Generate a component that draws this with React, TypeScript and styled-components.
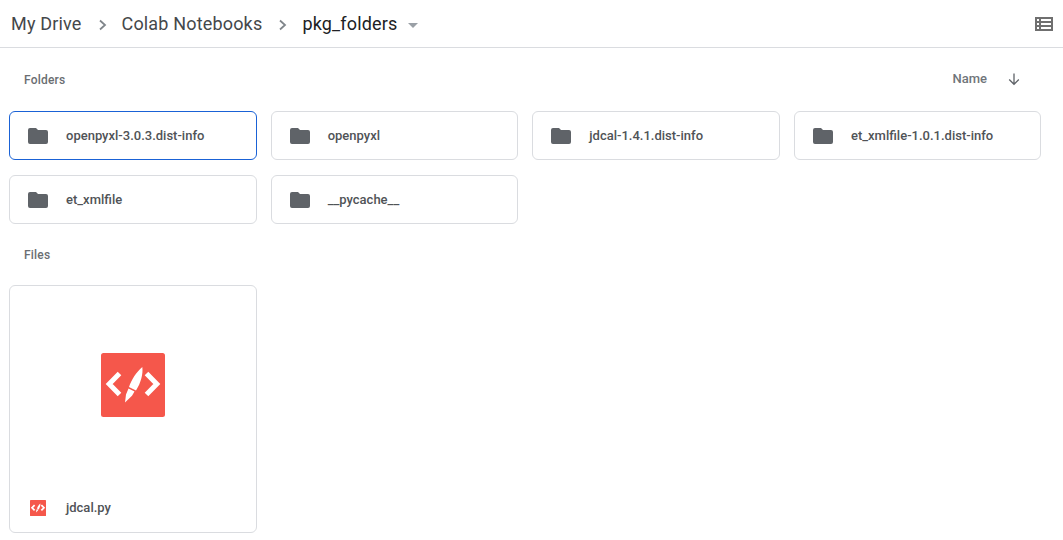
import React from "react";
import styled, { createGlobalStyle } from "styled-components";

const Global = createGlobalStyle`
  html, body { margin: 0; padding: 0; background: #fff; }
  body { font-family: Roboto, "Liberation Sans", sans-serif; overflow: hidden; }
`;
const Page = styled.div`width: 1063px; height: 540px; overflow: hidden; background: #fff;`;
const Header = styled.header`
  height: 47px; border-bottom: 1px solid #dadce0; display: flex; align-items: center;
  justify-content: space-between; padding: 0 10px 0 11px;
`;
const Crumbs = styled.nav`display: flex; align-items: center; font-size: 18px; letter-spacing: 0.17px;`;
const Crumb = styled.span<{ $current?: boolean }>`color: ${p => (p.$current ? "#202124" : "#44474a")};`;
const Chevron = styled.svg`width: 12px; height: 12px; margin: 2px 13px 0 15px; display: block;`;
const Caret = styled.span`
  width: 0; height: 0; margin: 3px 0 0 10px; border-left: 5px solid transparent;
  border-right: 5px solid transparent; border-top: 5px solid #9aa0a6;
`;
const Content = styled.main`padding: 0 22px 0 9px;`;
const SectionRow = styled.div`
  box-sizing: border-box; display: flex; align-items: center; justify-content: space-between;
  height: 63px; padding: 0 20px 0 15px;
`;
const SectionTitle = styled.h2`margin: 0; font-size: 12px; font-weight: 500; color: #6a6e72; letter-spacing: 0.2px;`;
const Sort = styled.div`display: flex; align-items: center; gap: 20px; margin-top: -2px; font-size: 13px; font-weight: 500; color: #70757a;`;
const FolderGrid = styled.div`display: grid; grid-template-columns: repeat(4, 247.5px); column-gap: 14.17px; row-gap: 15px;`;
const FolderCard = styled.div<{ $selected?: boolean }>`
  box-sizing: border-box; height: 49px; display: flex; align-items: center; padding-left: 18px;
  gap: 18px; border-radius: 6px; font-size: 13px; font-weight: 500; color: #505357;
  border: 1px solid ${p => (p.$selected ? "#1a62d6" : "#dadce0")};
`;
const FilesTitle = styled(SectionTitle)`padding: 24px 0 0 15px; height: 37px;`;
const FileCard = styled.div`
  box-sizing: border-box; width: 248px; height: 248px; border: 1px solid #dadce0;
  border-radius: 6px; display: flex; flex-direction: column;
`;
const Preview = styled.div`height: 198px; display: flex; align-items: center; justify-content: center;`;
const FileName = styled.div`
  display: flex; align-items: center; gap: 20px; padding-left: 20px; height: 48px;
  font-size: 13px; font-weight: 500; color: #505357;
`;
const FileLabel = styled.span`padding-bottom: 2px;`;
const Folder = () => (
  <svg width="20" height="16" viewBox="0 0 20 16">
    <path fill="#5f6368" d="M2 0h6l2 2h8a2 2 0 0 1 2 2v10a2 2 0 0 1-2 2H2a2 2 0 0 1-2-2V2a2 2 0 0 1 2-2z" />
  </svg>
);
const CodeIcon = ({ size }: { size: number }) => (
  <svg width={size} height={size} viewBox="0 0 64 64">
    <rect width="64" height="64" rx="2.5" fill="#f5574b" />
    <path fill="none" stroke="#fff" strokeWidth={size < 32 ? 7 : 5} d="M18.5 20.5L8.2 31l10.3 10.5M45.5 20.5L55.8 31 45.5 41.5" />
    <path fill="#fff" d="M41.3 14c1 7-1.5 16-6.3 23.500L28 34C30.500 26.500 35.500 19 41.300 14zM27.500 35.500l6 3-2.500 4.300-7 6.700 1-8z" />
  </svg>
);
const names = ["openpyxl-3.0.3.dist-info", "openpyxl", "jdcal-1.4.1.dist-info", "et_xmlfile-1.0.1.dist-info", "et_xmlfile", "__pycache__"];
const ChevronIcon = () => (
  <Chevron viewBox="0 0 12 12"><path d="M3 1.500L8 6l-5 4.500" fill="none" stroke="#80868b" strokeWidth="1.800" /></Chevron>
);
export default function App() {
  return (
    <Page>
      <Global />
      <Header>
        <Crumbs>
          <Crumb>My Drive</Crumb>
          <ChevronIcon />
          <Crumb>Colab Notebooks</Crumb>
          <ChevronIcon />
          <Crumb $current>pkg_folders</Crumb>
          <Caret />
        </Crumbs>
        <svg width="18" height="14" viewBox="0 0 18 14">
          <path fill="#6f6f6f" fillRule="evenodd" d="M0 0h18v14H0zM2 2v2h2V2zm4 0v2h10V2zM2 6v2h2V6zm4 0v2h10V6zM2 10v2h2v-2zm4 0v2h10v-2z" />
        </svg>
      </Header>
      <Content>
        <SectionRow>
          <SectionTitle>Folders</SectionTitle>
          <Sort>
            <span>Name</span>
            <svg width="14" height="14" viewBox="0 0 14 14">
              <path d="M7 1.500v10.500M2.200 7.500L7 12.300l4.800-4.800" fill="none" stroke="#5f6368" strokeWidth="1.300" />
            </svg>
          </Sort>
        </SectionRow>
        <FolderGrid>
          {names.map((n, i) => (
            <FolderCard key={n} $selected={i === 0}><Folder /><span>{n}</span></FolderCard>
          ))}
        </FolderGrid>
        <FilesTitle>Files</FilesTitle>
        <FileCard>
          <Preview><CodeIcon size={64} /></Preview>
          <FileName><CodeIcon size={16} /><FileLabel>jdcal.py</FileLabel></FileName>
        </FileCard>
      </Content>
    </Page>
  );
}
